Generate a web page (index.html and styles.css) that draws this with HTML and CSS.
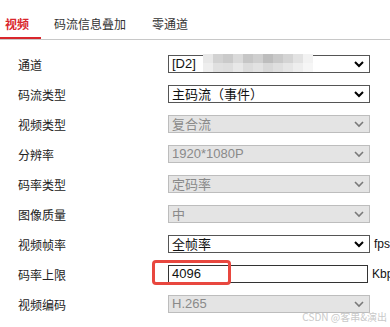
FILE: index.html
```html
<!DOCTYPE html>
<html lang="zh-CN">
<head>
    <meta charset="UTF-8">
    <meta name="viewport" content="width=device-width, initial-scale=1.0">
    <title>视频参数</title>
    <link rel="stylesheet" href="styles.css">
</head>
<body>
<div class="page">
    <div class="tabs">
        <div class="tab active">视频</div>
        <div class="tab">码流信息叠加</div>
        <div class="tab">零通道</div>
    </div>

    <div class="form">
        <div class="row">
            <div class="label">通道</div>
            <div class="select">
                <span class="value">[D2]</span>
                <span class="mosaic">
                    <i class="m1"></i><i class="m2"></i><i class="m3"></i><i class="m4"></i><i class="m5"></i><i class="m6"></i><i class="m7"></i><i class="m8"></i><i class="m9"></i><i class="m10"></i><i class="m11"></i>
                    <i class="n1"></i><i class="n2"></i><i class="n3"></i><i class="n4"></i><i class="n5"></i><i class="n6"></i><i class="n7"></i><i class="n8"></i><i class="n9"></i><i class="n10"></i><i class="n11"></i>
                </span>
                <svg class="arrow" width="10" height="7" viewBox="0 0 10 7"><path d="M1 1l4 4 4-4" fill="none" stroke="#000" stroke-width="2"/></svg>
            </div>
        </div>

        <div class="row">
            <div class="label">码流类型</div>
            <div class="select">
                <span class="value cn">主码流（事件）</span>
                <svg class="arrow" width="10" height="7" viewBox="0 0 10 7"><path d="M1 1l4 4 4-4" fill="none" stroke="#000" stroke-width="2"/></svg>
            </div>
        </div>

        <div class="row">
            <div class="label">视频类型</div>
            <div class="select disabled">
                <span class="value cn">复合流</span>
                <svg class="arrow" width="10" height="7" viewBox="0 0 10 7"><path d="M1 1l4 4 4-4" fill="none" stroke="#7a7a7a" stroke-width="1.6"/></svg>
            </div>
        </div>

        <div class="row">
            <div class="label">分辨率</div>
            <div class="select disabled">
                <span class="value">1920*1080P</span>
                <svg class="arrow" width="10" height="7" viewBox="0 0 10 7"><path d="M1 1l4 4 4-4" fill="none" stroke="#7a7a7a" stroke-width="1.6"/></svg>
            </div>
        </div>

        <div class="row">
            <div class="label">码率类型</div>
            <div class="select disabled">
                <span class="value cn">定码率</span>
                <svg class="arrow" width="10" height="7" viewBox="0 0 10 7"><path d="M1 1l4 4 4-4" fill="none" stroke="#7a7a7a" stroke-width="1.6"/></svg>
            </div>
        </div>

        <div class="row">
            <div class="label">图像质量</div>
            <div class="select disabled">
                <span class="value cn">中</span>
                <svg class="arrow" width="10" height="7" viewBox="0 0 10 7"><path d="M1 1l4 4 4-4" fill="none" stroke="#7a7a7a" stroke-width="1.6"/></svg>
            </div>
        </div>

        <div class="row">
            <div class="label">视频帧率</div>
            <div class="select">
                <span class="value cn">全帧率</span>
                <svg class="arrow" width="10" height="7" viewBox="0 0 10 7"><path d="M1 1l4 4 4-4" fill="none" stroke="#000" stroke-width="2"/></svg>
            </div>
            <span class="unit">fps</span>
        </div>

        <div class="row">
            <div class="label">码率上限</div>
            <div class="input">4096</div>
            <span class="unit">Kbps</span>
            <div class="highlight"></div>
        </div>

        <div class="row">
            <div class="label">视频编码</div>
            <div class="select disabled">
                <span class="value">H.265</span>
                <svg class="arrow" width="10" height="7" viewBox="0 0 10 7"><path d="M1 1l4 4 4-4" fill="none" stroke="#7a7a7a" stroke-width="1.6"/></svg>
            </div>
        </div>
    </div>

    <div class="watermark">CSDN @客串&amp;演出</div>
</div>
</body>
</html>
```

FILE: styles.css
```css
* {
    margin: 0;
    padding: 0;
    box-sizing: border-box;
}

body {
    font-family: "Liberation Sans", "Noto Sans CJK SC", sans-serif;
    background: #fff;
    color: #222;
    width: 390px;
    height: 327px;
    overflow: hidden;
}

.page {
    position: relative;
    height: 327px;
}

.tabs {
    display: flex;
    height: 40px;
    border-bottom: 1px solid #c8c8c8;
}

.tab {
    padding: 15px 13px 0;
    height: 39px;
    font-size: 12px;
    line-height: 18px;
    color: #333;
    font-family: "Noto Sans CJK SC", sans-serif;
}

.tab:first-child {
    padding-left: 5px;
    padding-right: 12px;
}

.tab.active {
    color: #d9262c;
    font-weight: bold;
    border-bottom: 2px solid #d9262c;
}

.form {
    padding-top: 9px;
}

.row {
    position: relative;
    display: flex;
    align-items: center;
    height: 30px;
}

.label {
    flex: none;
    width: 168px;
    padding-left: 18px;
    font-size: 12px;
    color: #222;
    font-family: "Noto Sans CJK SC", sans-serif;
}

.select {
    position: relative;
    flex: none;
    display: flex;
    align-items: center;
    width: 202px;
    height: 18px;
    padding: 0 5px 0 3px;
    border: 1px solid #555;
    background: #fff;
    font-size: 13px;
    color: #111;
}

.select .value {
    flex: 1;
    line-height: 16px;
    white-space: nowrap;
}

.select .value.cn {
    font-size: 13px;
    font-family: "Noto Sans CJK SC", sans-serif;
}

.select.disabled {
    background: #e4e4e4;
    border-color: #bdbdbd;
    color: #8a8a8a;
}

.arrow {
    flex: none;
}

.mosaic {
    position: absolute;
    left: 34px;
    top: -2px;
    display: grid;
    grid-template-columns: repeat(11, 10px);
    grid-template-rows: 9px 9px;
}

.mosaic i { display: block; }
.m1 { background: #e8e8e8; }
.m2 { background: #d2d2d2; }
.m3 { background: #cacaca; }
.m4 { background: #dadada; }
.m5 { background: #c6c6c6; }
.m6 { background: #cfcfcf; }
.m7 { background: #bdbdbd; }
.m8 { background: #c9c9c9; }
.m9 { background: #d4d4d4; }
.m10 { background: #e2e2e2; }
.m11 { background: #f2f2f2; }
.n1 { background: #eeeeee; }
.n2 { background: #e0e0e0; }
.n3 { background: #dedede; }
.n4 { background: #e8e8e8; }
.n5 { background: #dcdcdc; }
.n6 { background: #e2e2e2; }
.n7 { background: #d8d8d8; }
.n8 { background: #dfdfdf; }
.n9 { background: #e6e6e6; }
.n10 { background: #eeeeee; }
.n11 { background: #f6f6f6; }

.input {
    flex: none;
    width: 200px;
    height: 18px;
    padding-left: 3px;
    border: 1px solid #333;
    font-size: 13px;
    line-height: 16px;
    color: #111;
}

.unit {
    flex: none;
    margin-left: 4px;
    font-size: 12px;
    color: #111;
    white-space: nowrap;
}

.highlight {
    position: absolute;
    left: 152px;
    top: 1px;
    width: 79px;
    height: 25px;
    border: 3px solid #e8473f;
    border-radius: 4px;
}

.watermark {
    position: absolute;
    right: 3px;
    bottom: 3px;
    font-size: 10px;
    color: #c9c9c9;
    font-family: "Noto Sans CJK SC", sans-serif;
}
```
